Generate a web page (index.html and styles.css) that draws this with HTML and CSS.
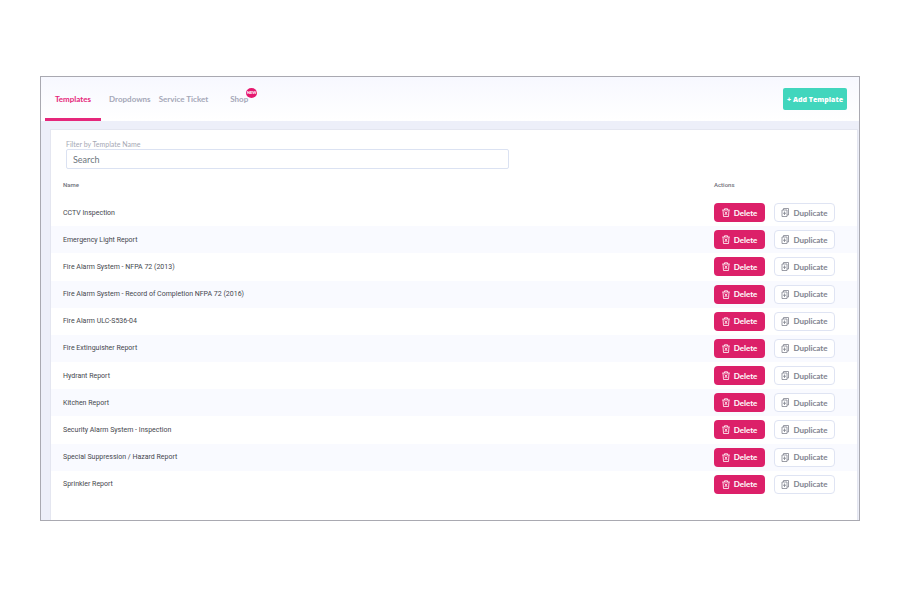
FILE: index.html
```html
<!DOCTYPE html>
<html lang="en">

<head>
    <meta charset="UTF-8">
    <meta name="viewport" content="width=device-width, initial-scale=1.0">
    <title>Templates</title>
    <link rel="stylesheet" href="styles.css">
</head>

<body>
    <svg class="sprite" aria-hidden="true">
        <symbol id="trash" viewBox="0 0 16 18">
            <path d="M0.500 4h15M5 4V1.500h6V4M2 4l1 13h10l1-13M5.500 7l5 7M10.500 7l-5 7" />
        </symbol>
        <symbol id="copy" viewBox="0 0 16 18">
            <path d="M5 4V1h10v13h-3M2 4h10v13H2zM7 7v7M4 10.500h6" />
        </symbol>
    </svg>
    <div class="window">
        <header class="topbar">
            <nav class="tabs">
                <a class="tab active" href="#">Templates</a>
                <a class="tab" href="#">Dropdowns</a>
                <a class="tab" href="#">Service Ticket</a>
                <a class="tab shop" href="#">Shop<span class="badge">NEW</span></a>
            </nav>
            <button class="add" type="button">+ Add Template</button>
        </header>
        <main class="content">
            <div class="filter">
                <label for="search">Filter by Template Name</label>
                <input type="text" id="search" placeholder="Search">
            </div>
            <table class="templates">
                <thead>
                    <tr>
                        <th>Name</th>
                        <th class="actions">Actions</th>
                    </tr>
                </thead>
                <tbody id="rows"></tbody>
            </table>
        </main>
    </div>
    <script>
        var names = [
            "CCTV Inspection",
            "Emergency Light Report",
            "Fire Alarm System - NFPA 72 (2013)",
            "Fire Alarm System - Record of Completion NFPA 72 (2016)",
            "Fire Alarm ULC-S536-04",
            "Fire Extinguisher Report",
            "Hydrant Report",
            "Kitchen Report",
            "Security Alarm System - Inspection",
            "Special Suppression / Hazard Report",
            "Sprinkler Report"
        ];
        var rows = document.querySelector("#rows");
        names.forEach(function (name) {
            rows.innerHTML += '<tr><td>' + name + '</td><td class="actions"><div class="buttons">' +
                '<button type="button" class="btn delete"><svg class="icon"><use href="#trash"/></svg>Delete</button>' +
                '<button type="button" class="btn duplicate"><svg class="icon"><use href="#copy"/></svg>Duplicate</button>' +
                '</div></td></tr>';
        });
    </script>
</body>

</html>
```
FILE: styles.css
```css
* {
    box-sizing: border-box;
}

body {
    margin: 0;
    padding: 76px 40px;
    background: #fff;
    font-family: Lato, sans-serif;
}

.sprite {
    display: none;
}

.window {
    border: 1px solid #a9a9b1;
    background: #edeff9;
}

.topbar {
    display: flex;
    justify-content: space-between;
    align-items: center;
    height: 44px;
    padding: 0 12px 0 4px;
    background: linear-gradient(#f7f8ff, #fff);
}

.tabs {
    display: flex;
    align-self: stretch;
}

.tab {
    display: flex;
    align-items: center;
    padding: 0 10px;
    border-bottom: 3px solid transparent;
    border-top: 3px solid transparent;
    color: #a5a8b8;
    font-size: 8px;
    font-weight: 700;
    text-decoration: none;
}

.tab + .tab {
    padding: 0 0 0 8px;
}

.tab.active {
    border-bottom-color: #e5277b;
    color: #e5277b;
}

.tab.shop {
    position: relative;
    margin-left: 14px;
}

.badge {
    position: absolute;
    top: 8px;
    right: -9px;
    width: 11px;
    height: 10px;
    border-radius: 50%;
    background: #e5186f;
    color: #fff;
    font-size: 4px;
    font-weight: 900;
    line-height: 10px;
    text-align: center;
}

.add {
    height: 22px;
    padding: 0 4px;
    border: 0;
    border-radius: 2px;
    background: #41d6bd;
    color: #fff;
    font-family: "Open Sans", sans-serif;
    font-size: 7px;
    font-weight: 800;
    white-space: nowrap;
}

.content {
    margin: 8px 1px 0 9px;
    padding: 10px 0 22px;
    border: 1px solid #e4e6f0;
    border-bottom: 0;
    background: #fff;
}

.filter {
    width: 55%;
    margin-left: 15px;
}

.filter label {
    display: block;
    color: #a5a8b4;
    font-size: 7px;
    line-height: 9px;
}

.filter input {
    display: block;
    width: 100%;
    height: 20px;
    padding: 0 6px;
    border: 1px solid #dbe2f2;
    border-radius: 2px;
    color: #6c757d;
    font-family: Lato, sans-serif;
    font-size: 9px;
}

.filter input::placeholder {
    color: #6c757d;
}

.templates {
    width: 100%;
    height: 329px;
    border-collapse: collapse;
    font-family: Roboto, sans-serif;
}

.templates th {
    height: 30px;
    padding: 0 12px;
    color: #6e7078;
    font-size: 6px;
    font-weight: 500;
    text-align: left;
}

.templates td {
    padding: 0 12px;
    color: #45474e;
    font-size: 7px;
}

.templates tbody tr:nth-child(even) {
    background: #f9faff;
}

.templates .actions {
    width: 143px;
    padding: 0;
}

.buttons {
    display: flex;
    gap: 9px;
}

.btn {
    display: flex;
    align-items: center;
    justify-content: center;
    height: 19px;
    padding: 0;
    border: 0;
    border-radius: 4px;
    font-family: Lato, sans-serif;
    font-size: 8px;
    font-weight: 700;
}

.delete {
    width: 51px;
    gap: 4px;
    background: #dc2069;
    color: #fff;
}

.duplicate {
    width: 61px;
    gap: 4px;
    border: 1px solid #dfe4f3;
    background: #fff;
    color: #81848f;
}

.icon {
    width: 8px;
    height: 9px;
    fill: none;
    stroke: currentColor;
    stroke-width: 1.6;
}
```
